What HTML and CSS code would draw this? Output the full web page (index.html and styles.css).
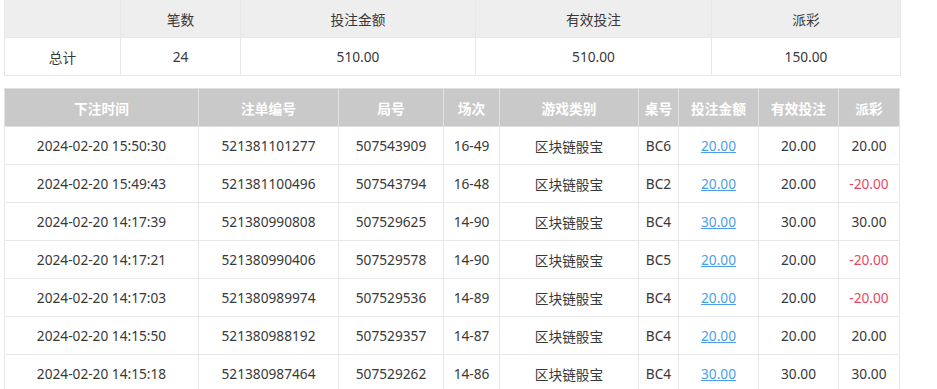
FILE: index.html
```html
<!DOCTYPE html>
<html lang="zh-CN">
<head>
<meta charset="utf-8">
<title>投注记录</title>
<link rel="stylesheet" href="styles.css">
</head>
<body>
<div class="page">
  <table class="summary">
    <colgroup>
      <col class="s1"><col class="s2"><col class="s3"><col class="s4"><col class="s5">
    </colgroup>
    <thead>
      <tr><th></th><th>笔数</th><th>投注金额</th><th>有效投注</th><th>派彩</th></tr>
    </thead>
    <tbody>
      <tr><td>总计</td><td>24</td><td>510.00</td><td>510.00</td><td>150.00</td></tr>
    </tbody>
  </table>

  <table class="records">
    <colgroup>
      <col class="c1"><col class="c2"><col class="c3"><col class="c4"><col class="c5"><col class="c6"><col class="c7"><col class="c8"><col class="c9">
    </colgroup>
    <thead>
      <tr><th>下注时间</th><th>注单编号</th><th>局号</th><th>场次</th><th>游戏类别</th><th>桌号</th><th>投注金额</th><th>有效投注</th><th>派彩</th></tr>
    </thead>
    <tbody>
      <tr><td>2024-02-20 15:50:30</td><td>521381101277</td><td>507543909</td><td>16-49</td><td>区块链骰宝</td><td>BC6</td><td><a class="amt" href="#">20.00</a></td><td>20.00</td><td>20.00</td></tr>
      <tr><td>2024-02-20 15:49:43</td><td>521381100496</td><td>507543794</td><td>16-48</td><td>区块链骰宝</td><td>BC2</td><td><a class="amt" href="#">20.00</a></td><td>20.00</td><td class="neg">-20.00</td></tr>
      <tr><td>2024-02-20 14:17:39</td><td>521380990808</td><td>507529625</td><td>14-90</td><td>区块链骰宝</td><td>BC4</td><td><a class="amt" href="#">30.00</a></td><td>30.00</td><td>30.00</td></tr>
      <tr><td>2024-02-20 14:17:21</td><td>521380990406</td><td>507529578</td><td>14-90</td><td>区块链骰宝</td><td>BC5</td><td><a class="amt" href="#">20.00</a></td><td>20.00</td><td class="neg">-20.00</td></tr>
      <tr><td>2024-02-20 14:17:03</td><td>521380989974</td><td>507529536</td><td>14-89</td><td>区块链骰宝</td><td>BC4</td><td><a class="amt" href="#">20.00</a></td><td>20.00</td><td class="neg">-20.00</td></tr>
      <tr><td>2024-02-20 14:15:50</td><td>521380988192</td><td>507529357</td><td>14-87</td><td>区块链骰宝</td><td>BC4</td><td><a class="amt" href="#">20.00</a></td><td>20.00</td><td>20.00</td></tr>
      <tr><td>2024-02-20 14:15:18</td><td>521380987464</td><td>507529262</td><td>14-86</td><td>区块链骰宝</td><td>BC4</td><td><a class="amt" href="#">30.00</a></td><td>30.00</td><td>30.00</td></tr>
    </tbody>
  </table>
</div>
</body>
</html>
```

FILE: styles.css
```css
html, body {
  margin: 0;
  padding: 0;
  background: #ffffff;
}

body {
  font-family: "Noto Sans", "Noto Sans CJK SC", sans-serif;
  font-size: 13.7px;
  color: #383838;
}

.page {
  padding: 0 0 0 4px;
  display: flex;
  flex-direction: column;
  gap: 12px;
  align-items: flex-start;
}

table {
  border-collapse: collapse;
  table-layout: fixed;
}

th, td {
  border: 1px solid #e8e8e8;
  text-align: center;
  padding: 0;
  white-space: nowrap;
  overflow: hidden;
}

.summary {
  width: 896px;
  margin-top: -1px;
}

.summary .s1 { width: 116px; }
.summary .s2 { width: 120px; }
.summary .s3 { width: 235px; }
.summary .s4 { width: 236px; }
.summary .s5 { width: 189px; }

.summary th {
  background: #eeeeee;
  font-weight: normal;
  height: 37px;
  color: #383838;
}

.summary td {
  height: 37px;
}

.records {
  width: 895px;
}

.records .c1 { width: 194px; }
.records .c2 { width: 140px; }
.records .c3 { width: 105px; }
.records .c4 { width: 56px; }
.records .c5 { width: 139px; }
.records .c6 { width: 40px; }
.records .c7 { width: 80px; }
.records .c8 { width: 80px; }
.records .c9 { width: 61px; }

.records th {
  background: #c9c9c9;
  color: #ffffff;
  font-weight: bold;
  height: 37px;
  border-color: #e0e0e0;
}

.records td {
  height: 37px;
}

.amt {
  color: #4a9fe6;
  text-decoration: underline;
}

.neg {
  color: #e8485f;
}
```
